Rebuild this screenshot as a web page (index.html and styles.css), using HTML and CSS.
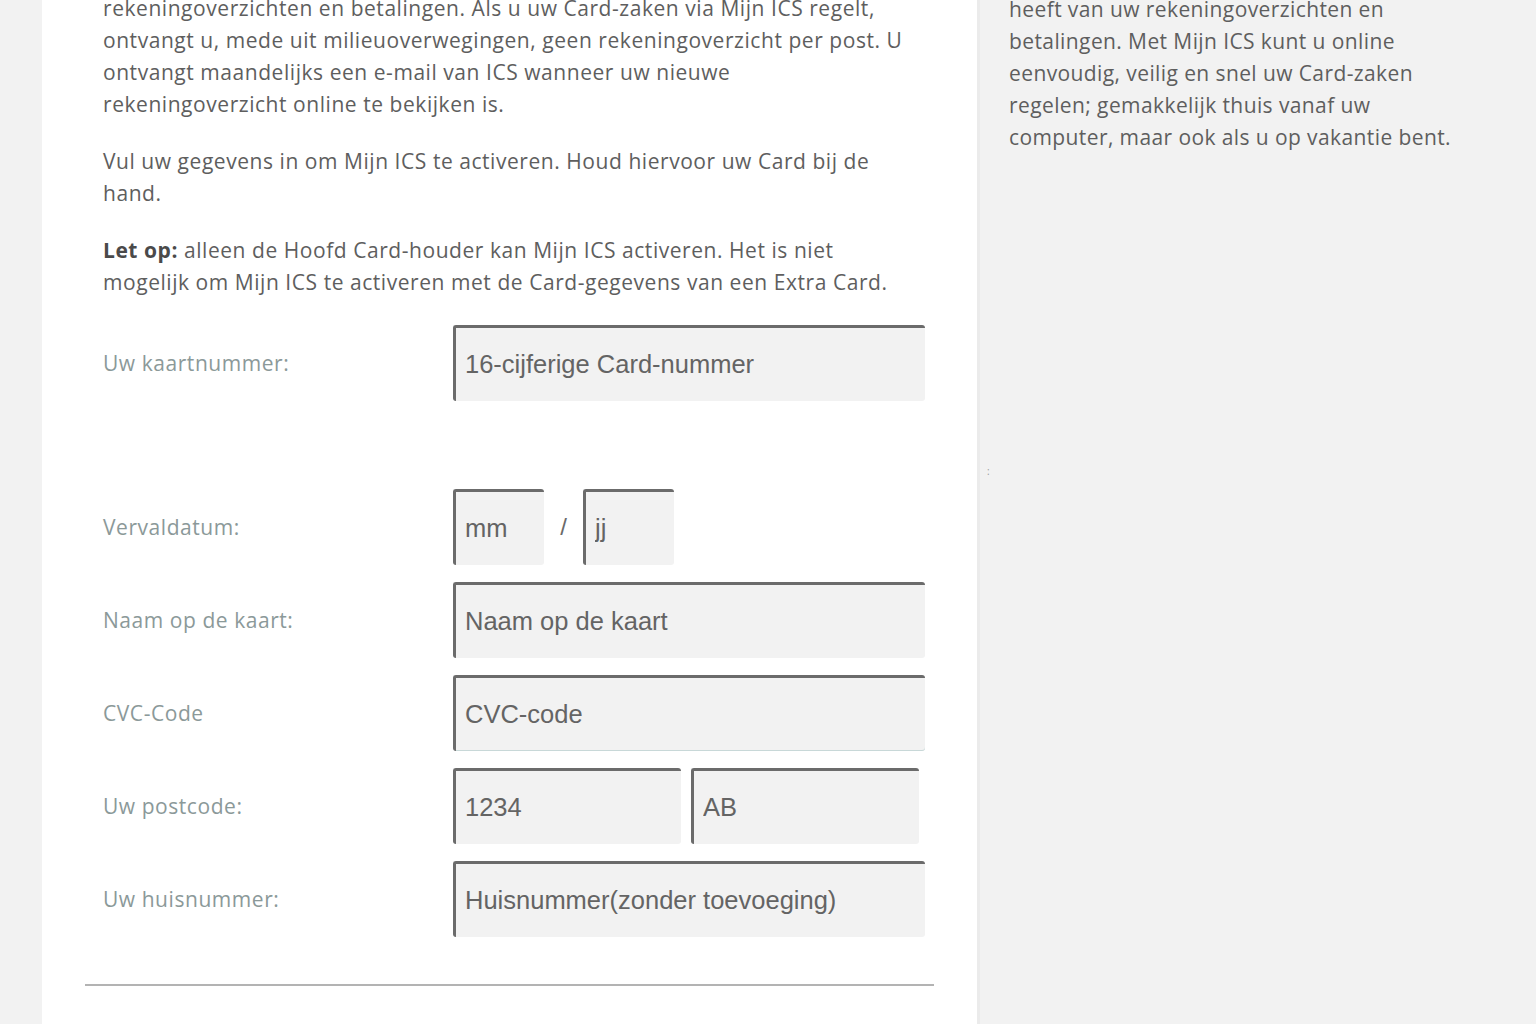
FILE: index.html
```html
<!DOCTYPE html>
<html lang="nl">
<head>
<meta charset="utf-8">
<title>Mijn ICS activeren</title>
<link rel="stylesheet" href="styles.css">
</head>
<body>
<div class="page">
  <main class="panel">
    <div class="intro">
      <p>rekeningoverzichten en betalingen. Als u uw Card-zaken via Mijn ICS regelt,<br>ontvangt u, mede uit milieuoverwegingen, geen rekeningoverzicht per post. U<br>ontvangt maandelijks een e-mail van ICS wanneer uw nieuwe<br>rekeningoverzicht online te bekijken is.</p>
      <p>Vul uw gegevens in om Mijn ICS te activeren. Houd hiervoor uw Card bij de<br>hand.</p>
      <p><strong>Let op:</strong> alleen de Hoofd Card-houder kan Mijn ICS activeren. Het is niet<br>mogelijk om Mijn ICS te activeren met de Card-gegevens van een Extra Card.</p>
    </div>
    <form class="form">
      <div class="row row-card">
        <label class="label">Uw kaartnummer:</label>
        <div class="field"><input class="input wide" type="text" placeholder="16-cijferige Card-nummer"></div>
      </div>
      <div class="row">
        <label class="label">Vervaldatum:</label>
        <div class="field">
          <input class="input small" type="text" placeholder="mm">
          <span class="slash">/</span>
          <input class="input small" type="text" placeholder="jj">
        </div>
      </div>
      <div class="row">
        <label class="label">Naam op de kaart:</label>
        <div class="field"><input class="input wide" type="text" placeholder="Naam op de kaart"></div>
      </div>
      <div class="row">
        <label class="label">CVC-Code</label>
        <div class="field"><input class="input wide cvc" type="text" placeholder="CVC-code"></div>
      </div>
      <div class="row">
        <label class="label">Uw postcode:</label>
        <div class="field pc">
          <input class="input half" type="text" placeholder="1234">
          <input class="input half" type="text" placeholder="AB">
        </div>
      </div>
      <div class="row">
        <label class="label">Uw huisnummer:</label>
        <div class="field"><input class="input wide" type="text" placeholder="Huisnummer(zonder toevoeging)"></div>
      </div>
    </form>
    <hr class="divider">
  </main>
  <aside class="side">
    <p>heeft van uw rekeningoverzichten en<br>betalingen. Met Mijn ICS kunt u online<br>eenvoudig, veilig en snel uw Card-zaken<br>regelen; gemakkelijk thuis vanaf uw<br>computer, maar ook als u op vakantie bent.</p>
    <span class="dots">:</span>
  </aside>
</div>
</body>
</html>
```
FILE: styles.css
```css
html, body {
  margin: 0;
  padding: 0;
  background: #f2f2f2;
  height: 1024px;
  overflow: hidden;
}
.page {
  display: flex;
  padding-left: 42px;
  font-family: "Open Sans", "Noto Sans", sans-serif;
  color: #5e5e5e;
  font-size: 21px;
  line-height: 32px;
  letter-spacing: 0.55px;
}
.panel {
  width: 935px;
  background: #ffffff;
  padding: 0 0 40px 0;
  min-height: 1100px;
}
.intro {
  padding-left: 61px;
  margin-top: -8px;
}
.intro p {
  margin: 0 0 25px 0;
  white-space: nowrap;
}
.intro p:last-child { margin-bottom: 0; }
.intro strong { color: #4a4a4a; font-weight: 700; }
.form {
  margin-top: 27px;
  padding-left: 61px;
}
.row {
  display: flex;
  align-items: center;
  margin-bottom: 17px;
}
.row-card { margin-bottom: 88px; }
.label {
  width: 350px;
  color: #8b9999;
  font-size: 21px;
}
.field {
  display: flex;
  align-items: center;
}
.input {
  box-sizing: border-box;
  height: 76px;
  background: #f2f2f2;
  border: 0;
  border-top: 3px solid #6b6b6b;
  border-left: 3px solid #6b6b6b;
  border-radius: 3px;
  padding: 0 0 0 9px;
  font-family: "Liberation Sans", Arial, sans-serif;
  font-size: 25.5px;
  letter-spacing: 0;
  color: #5e5e5e;
  outline: none;
}
.input::placeholder { color: #646464; opacity: 1; }
.wide { width: 472px; }
.small { width: 91px; }
.half { width: 228px; }
.pc { gap: 10px; }
.cvc { box-shadow: inset 0 -1px 0 #c8d8d8; }
.slash {
  width: 39px;
  text-align: center;
  font-family: "Liberation Sans", Arial, sans-serif;
  font-size: 24px;
  letter-spacing: 0;
  color: #6a6a6a;
}
.divider {
  margin: 47px 0 0 43px;
  width: 849px;
  border: 0;
  border-top: 2px solid #b3b3b3;
}
.side {
  position: relative;
  flex: 1;
  border-left: 3px solid #ebebeb;
  padding-left: 29px;
  letter-spacing: 0.4px;
}
.side p {
  margin: -7px 0 0 0;
  white-space: nowrap;
}
.dots {
  position: absolute;
  left: 7px;
  top: 455px;
  font-size: 10px;
  color: #9a9a9a;
}
```
